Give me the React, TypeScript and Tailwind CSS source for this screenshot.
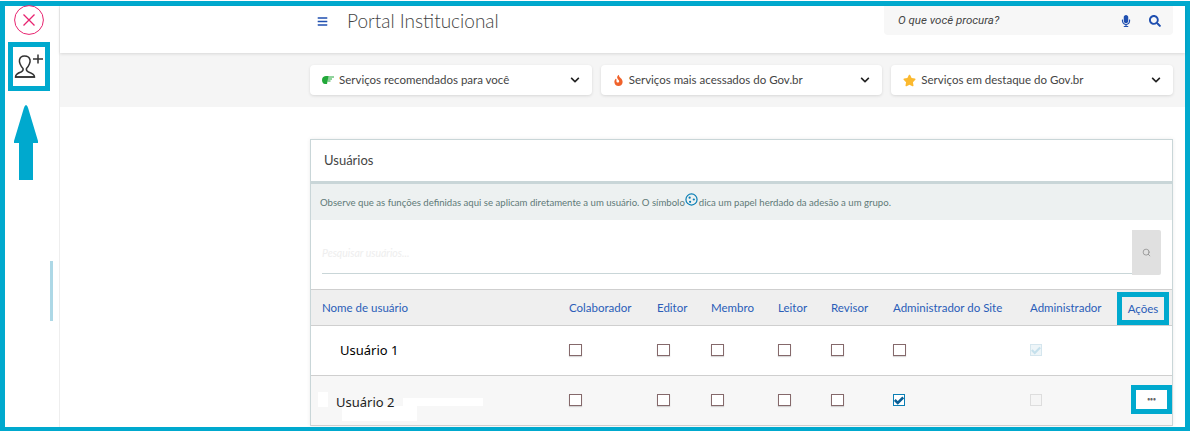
import React from "react";
import { FaBars, FaChevronDown, FaFire, FaMicrophone, FaSearch, FaStar } from "react-icons/fa";
import { Search } from "lucide-react";

const FRAME = "border-[5px] border-[#00a9ce]";

const columns = [
  { label: "Colaborador", w: "w-[88px]" },
  { label: "Editor", w: "w-[54px]" },
  { label: "Membro", w: "w-[67px]" },
  { label: "Leitor", w: "w-[53px]" },
  { label: "Revisor", w: "w-[62px]" },
  { label: "Administrador do Site", w: "w-[137px]" },
  { label: "Administrador", w: "w-[87px]" },
];

function Check({ state }: { state?: "checked" | "locked" | "disabled" }) {
  if (state === "checked") {
    return (
      <span className="flex h-[12px] w-[12px] items-center justify-center border border-[#0b7fb5] bg-white">
        <svg viewBox="0 0 12 12" className="h-[10px] w-[10px]">
          <path d="M1 6 L4.5 9.5 L11 3" fill="none" stroke="#0a5f96" strokeWidth="3" />
        </svg>
      </span>
    );
  }
  if (state === "locked") {
    return (
      <span className="flex h-[12px] w-[12px] items-center justify-center border border-[#d5e6ee] bg-[#eef5f8]">
        <svg viewBox="0 0 12 12" className="h-[10px] w-[10px]">
          <path d="M1 6 L4.5 9.5 L11 3" fill="none" stroke="#c5e0ec" strokeWidth="2.6" />
        </svg>
      </span>
    );
  }
  if (state === "disabled") {
    return <span className="block h-[12px] w-[12px] border border-[#dddddd] bg-[#f5f5f5]" />;
  }
  return <span className="block h-[12px] w-[13px] border border-[#85696b] bg-white shadow-[0_1px_1px_rgba(0,0,0,0.15)]" />;
}

function ServiceSelect({ icon, label }: { icon: React.ReactNode; label: string }) {
  return (
    <div className="flex h-[30px] flex-1 items-center justify-between rounded-[4px] bg-white pl-3 pr-3 shadow-[0_1px_3px_rgba(0,0,0,0.12)]">
      <span className="flex items-center gap-[5px] text-[11.5px] text-[#444444]">
        {icon}
        {label}
      </span>
      <FaChevronDown size={10} className="text-[#222222]" />
    </div>
  );
}

function Row({ name, states, bg, children }: { name: React.ReactNode; states: (undefined | "checked" | "locked" | "disabled")[]; bg: string; children?: React.ReactNode }) {
  return (
    <div className={`relative flex h-[50px] items-center border-b border-[#cfcfcf] pb-[2px] ${bg}`}>
      <div className="w-[258px]">{name}</div>
      {columns.map((c, i) => (
        <div key={c.label} className={c.w}>
          <Check state={states[i]} />
        </div>
      ))}
      {children}
    </div>
  );
}

export default function App() {
  return (
    <div className="h-[431px] w-[1191px] overflow-hidden bg-white pt-px pr-px font-['Lato',sans-serif]">
      <div className="relative flex h-[430px] border-[5px] border-b-4 border-[#00a9ce]">
        {/* left rail */}
        <aside className="flex w-[55px] shrink-0 flex-col items-start border-r border-[#eeeeee] bg-white">
          <svg viewBox="0 0 30 30" className="ml-[9px] mt-[-1px] h-[30px] w-[30px]">
            <circle cx="15" cy="15" r="14.4" fill="none" stroke="#e8236f" strokeWidth="1" />
            <path d="M9.5 9.5 L20.5 20.5 M20.5 9.5 L9.5 20.5" stroke="#e8236f" strokeWidth="1.3" />
          </svg>
          <div className={`ml-[3px] mt-[7px] h-[49px] w-[42px] ${FRAME} bg-white`}>
            <svg viewBox="0 0 32 39" className="h-[39px] w-[32px]">
              <path
                d="M2.5 30 C2.5 27 5 26 8 25 C10 24 10.5 23 10 21.5 C7.5 19 6 15 6.5 13 C7 10 9 9 11.5 9 C14 9 16.5 10 17 13 C17.5 15 16 19 13.5 21.5 C13 23 13.5 24 15.5 25 C18.5 26 21.5 27 21.5 30 Z"
                fill="none"
                stroke="#333333"
                strokeWidth="1.5"
              />
              <path d="M2 30 H22" stroke="#333333" strokeWidth="1.5" />
              <path d="M20 12 H30 M25 7.5 V16.5" stroke="#333333" strokeWidth="1.5" />
            </svg>
          </div>
          <svg viewBox="0 0 24 75" className="ml-[9px] mt-[14px] h-[75px] w-[24px]">
            <path d="M12 0 C13 0 14 2 15 6 L24 36 V38 H19 V75 H5 V38 H0 V36 L9 6 C10 2 11 0 12 0 Z" fill="#00a9ce" />
          </svg>
        </aside>

        <main className="flex min-w-0 flex-1 flex-col">
          {/* header */}
          <header className="relative z-10 flex h-[47px] shrink-0 items-start bg-white pl-[257px] pr-[12px] shadow-[0_1px_3px_rgba(0,0,0,0.12)]">
            <FaBars size={11} className="mt-[10px] text-[#1f4fb0]" />
            <h1 className="ml-[19px] mt-px text-[19px] font-light leading-[28px] text-[#444444]">Portal Institucional</h1>
            <div className="ml-auto flex h-[29px] w-[289px] items-center justify-between rounded-b-[4px] bg-[#f7f7f7] pl-[14px] pr-[12px]">
              <span className="font-['Roboto',sans-serif] text-[11.5px] italic text-[#444444]">O que você procura?</span>
              <span className="flex items-center gap-[17px] text-[#1f4fb0]">
                <FaMicrophone size={12} />
                <FaSearch size={12} />
              </span>
            </div>
          </header>

          {/* service dropdowns */}
          <section className="flex h-[54px] shrink-0 items-start gap-[9px] bg-[#f5f5f5] pl-[250px] pr-[12px] pt-[12px]">
            <ServiceSelect
              label="Serviços recomendados para você"
              icon={
                <svg viewBox="0 0 12 10" className="h-[10px] w-[12px]">
                  <path d="M0 5 C0 2 2 1 4 1 H6.5 L6 4 L5 9 H3 C1 9 0 7 0 5 Z" fill="#22a83a" />
                  <path d="M6 2 H12 M6 4 H10 M5.5 6 H8.5" stroke="#22a83a" strokeWidth="1" />
                </svg>
              }
            />
            <ServiceSelect label="Serviços mais acessados do Gov.br" icon={<FaFire size={11} className="text-[#f0622b]" />} />
            <ServiceSelect label="Serviços em destaque do Gov.br" icon={<FaStar size={13} className="text-[#fbb92f]" />} />
          </section>

          {/* users card */}
          <section className="flex-1 overflow-hidden pl-[250px] pr-[12px] pt-[32px]">
            <div className="border-x border-t border-[#c9d6d8] shadow-[0_0_4px_rgba(0,0,0,0.08)]">
              <div className="flex h-[44px] items-center border-b-[3px] border-[#c9d6d8] pl-[13px] pt-px text-[13px] text-[#444444]">Usuários</div>
              <div className="flex h-[36px] items-center bg-[#edf1f1] pl-[9px] pt-[3px] text-[9.6px] text-[#5f7a78]">
                Observe que as funções definidas aqui se aplicam diretamente a um usuário. O símbolo
                <svg viewBox="0 0 14 14" className="mb-[8px] ml-0 mr-px h-[13px] w-[13px]">
                  <circle cx="7" cy="7" r="6" fill="none" stroke="#0a7fb5" strokeWidth="1.3" />
                  <circle cx="5" cy="5" r="1.2" fill="#0a7fb5" />
                  <circle cx="9.5" cy="7" r="1.2" fill="#0a7fb5" />
                  <circle cx="5.5" cy="9.5" r="1.2" fill="#0a7fb5" />
                </svg>
                dica um papel herdado da adesão a um grupo.
              </div>
              <div className="flex h-[69px] items-start pl-[11px] pr-[11px] pt-[10px]">
                <div className="flex h-[44px] flex-1 items-end border-b border-[#c9d6d8] pb-[11px] text-[10.5px] italic text-[#eeeeee]">Pesquisar usuários...</div>
                <div className="flex h-[45px] w-[29px] items-center justify-center rounded-r-[2px] bg-[#e0e0e0]">
                  <Search size={9} className="text-[#8a8a8a]" />
                </div>
              </div>

              {/* table */}
              <div className="relative flex h-[37px] items-center border-y border-[#cfcfcf] bg-[#efefef] text-[11.5px] text-[#2a5db8]">
                <div className="w-[258px] pl-[11px]">Nome de usuário</div>
                {columns.map((c) => (
                  <div key={c.label} className={c.w}>
                    {c.label}
                  </div>
                ))}
                <div className={`absolute left-[806px] top-[2px] flex h-[33px] w-[52px] items-center justify-center ${FRAME}`}>Ações</div>
              </div>

              <Row
                bg="bg-white"
                states={[undefined, undefined, undefined, undefined, undefined, undefined, "locked"]}
                name={<span className="block pl-[29px] font-['Noto_Sans',sans-serif] text-[13px] leading-[16px] text-black">Usuário 1</span>}
              />
              <Row
                bg="bg-[#f7f7f7]"
                states={[undefined, undefined, undefined, undefined, undefined, "checked", "disabled"]}
                name={<span className="relative z-10 mt-[5px] block pl-[25px] font-['Noto_Sans',sans-serif] text-[13px] leading-[16px] text-[#222222]">Usuário 2</span>}
              >
                {/* pasted white patches over the real name */}
                <span className="absolute left-[7px] top-[16px] h-[15px] w-[10px] bg-white" />
                <span className="absolute left-[92px] top-[22px] h-[8px] w-[80px] bg-white" />
                <span className="absolute left-[31px] top-[30px] h-[15px] w-[75px] bg-white" />
                <div className={`absolute left-[820px] top-[9px] flex h-[29px] w-[41px] items-center justify-center ${FRAME} bg-white`}>
                  <span className="text-[5px] font-bold leading-none text-[#666666]">•••</span>
                </div>
              </Row>
            </div>
          </section>
        </main>

        {/* highlight bar on the rail */}
        <span className="absolute left-[45px] top-[255px] h-[60px] w-[3px] bg-[#add8e6]" />
      </div>
    </div>
  );
}
